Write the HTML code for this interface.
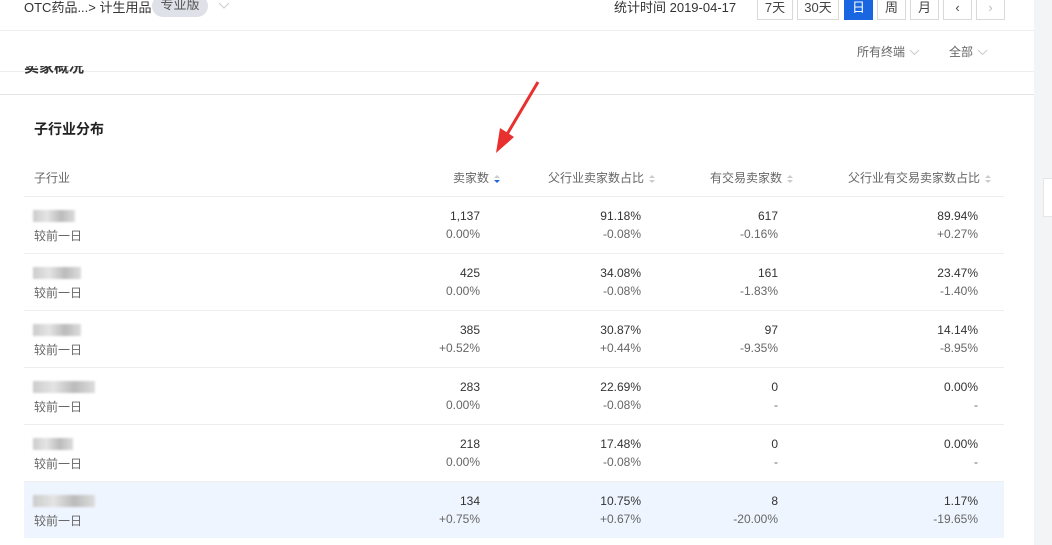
<!DOCTYPE html><html><head><meta charset="utf-8"><style>
body{margin:0;width:1052px;height:545px;overflow:hidden;background:#fff;font-family:"Liberation Sans","Noto Sans CJK SC",sans-serif;color:#333;position:relative}
.a{position:absolute;white-space:nowrap}
.r{text-align:right}
.btn{position:absolute;top:-4px;height:22px;border:1px solid #d9d9d9;font-size:13px;line-height:22px;text-align:center;color:#444;background:#fff}
.s{font-size:12px;color:#666}
.n{font-size:12px;color:#333}
.sort{display:inline-block;width:6px;margin-left:5px;vertical-align:middle}
.blur{position:absolute;left:33px;height:12px;background:linear-gradient(90deg,#ccc,#e4e4e4,#bbb,#ddd);filter:blur(1px)}
.chev{display:inline-block;vertical-align:middle;margin-left:4px}
</style></head><body>
<div class="a" style="left:1034px;top:0;width:18px;height:545px;background:#f3f4f6"></div>
<div class="a" style="left:1043px;top:178px;width:9px;height:37px;background:#fff;border:1px solid #e6e6e6"></div>
<div class="a" style="left:0;top:30px;width:1034px;border-top:1px solid #eee"></div>
<div class="a" style="left:0;top:71px;width:1034px;border-top:1px solid #eee"></div>
<div class="a" style="left:0;top:94px;width:1034px;border-top:1px solid #e4e4e4"></div>
<div class="a" style="left:24px;top:-3px;font-size:13px;color:#333">OTC药品...&gt; 计生用品</div>
<div class="a" style="left:152px;top:-5px;width:56px;height:22px;border-radius:11px;background:#dfe1e8;font-size:13px;line-height:20px;text-align:center;color:#555">专业版</div>
<svg class="a" style="left:218px;top:2px" width="12" height="8"><path d="M1 1L6 6L11 1" fill="none" stroke="#ccc"/></svg>
<div class="a" style="left:614px;top:-3px;font-size:13px;color:#333">统计时间 2019-04-17</div>
<div class="btn" style="left:757px;width:34px">7天</div>
<div class="btn" style="left:797px;width:40px">30天</div>
<div class="btn" style="left:844px;width:27px;background:#1a66e0;border-color:#1a66e0;color:#fff">日</div>
<div class="btn" style="left:877px;width:27px">周</div>
<div class="btn" style="left:910px;width:27px">月</div>
<div class="btn" style="left:943px;width:27px">‹</div>
<div class="btn" style="left:976px;width:27px;color:#bbb">›</div>
<div class="a" style="left:857px;top:43px;font-size:12px;color:#666">所有终端<svg class="chev" width="11" height="7"><path d="M1 1L5.5 5.5L10 1" fill="none" stroke="#ccc"/></svg></div>
<div class="a" style="left:949px;top:43px;font-size:12px;color:#666">全部<svg class="chev" width="11" height="7"><path d="M1 1L5.5 5.5L10 1" fill="none" stroke="#ccc"/></svg></div>
<div class="a" style="left:24px;top:66px;height:12px;overflow:hidden;font-size:15px;font-weight:bold;line-height:15px"><div style="margin-top:-6px">卖家概况</div></div>
<div class="a" style="left:34px;top:119px;font-size:14px;font-weight:bold;color:#222">子行业分布</div>
<div class="a s" style="left:34px;top:169px">子行业</div>
<div class="a s r" style="left:380px;width:120px;top:169px">卖家数<svg class="sort" viewBox="0 0 6 10" height="10"><path d="M0 4L3 1L6 4Z" fill="#ccc"/><path d="M0 6L3 9L6 6Z" fill="#1a66e0"/></svg></div>
<div class="a s r" style="left:500px;width:155px;top:169px">父行业卖家数占比<svg class="sort" viewBox="0 0 6 10" height="10"><path d="M0 4L3 1L6 4ZM0 6L3 9L6 6Z" fill="#ccc"/></svg></div>
<div class="a s r" style="left:660px;width:133px;top:169px">有交易卖家数<svg class="sort" viewBox="0 0 6 10" height="10"><path d="M0 4L3 1L6 4ZM0 6L3 9L6 6Z" fill="#ccc"/></svg></div>
<div class="a s r" style="left:800px;width:191px;top:169px">父行业有交易卖家数占比<svg class="sort" viewBox="0 0 6 10" height="10"><path d="M0 4L3 1L6 4ZM0 6L3 9L6 6Z" fill="#ccc"/></svg></div>
<div class="a" style="left:24px;top:196px;width:980px;border-top:1px solid #eee"></div>
<div class="a" style="left:24px;top:482px;width:980px;height:56px;background:#eef5fe"></div>
<div id="rows"></div>
<script>
var d=[["1,137","0.00%","91.18%","-0.08%","617","-0.16%","89.94%","+0.27%",42],["425","0.00%","34.08%","-0.08%","161","-1.83%","23.47%","-1.40%",48],["385","+0.52%","30.87%","+0.44%","97","-9.35%","14.14%","-8.95%",48],["283","0.00%","22.69%","-0.08%","0","-","0.00%","-",62],["218","0.00%","17.48%","-0.08%","0","-","0.00%","-",40],["134","+0.75%","10.75%","+0.67%","8","-20.00%","1.17%","-19.65%",62]];
var h="",R=[480,641,778,978];
d.forEach(function(r,i){var y=209+57*i;
h+='<div class="blur" style="top:'+(y+1)+'px;width:'+r[8]+'px"></div><div class="a s" style="left:34px;top:'+(y+18)+'px">较前一日</div>';
for(var c=0;c<4;c++){h+='<div class="a n r" style="left:'+(R[c]-100)+'px;width:100px;top:'+y+'px">'+r[c*2]+'</div><div class="a s r" style="left:'+(R[c]-100)+'px;width:100px;top:'+(y+18)+'px">'+r[c*2+1]+'</div>';}
if(i<5)h+='<div class="a" style="left:24px;top:'+(y+44)+'px;width:980px;border-top:1px solid #eee"></div>';});
document.getElementById("rows").innerHTML=h;
</script>
<svg class="a" style="left:0;top:0" width="1052" height="545"><line x1="538" y1="82" x2="506" y2="136" stroke="#e8312f" stroke-width="3"/><path d="M496 153L500 128L514 137Z" fill="#e8312f"/></svg>
</body></html>
